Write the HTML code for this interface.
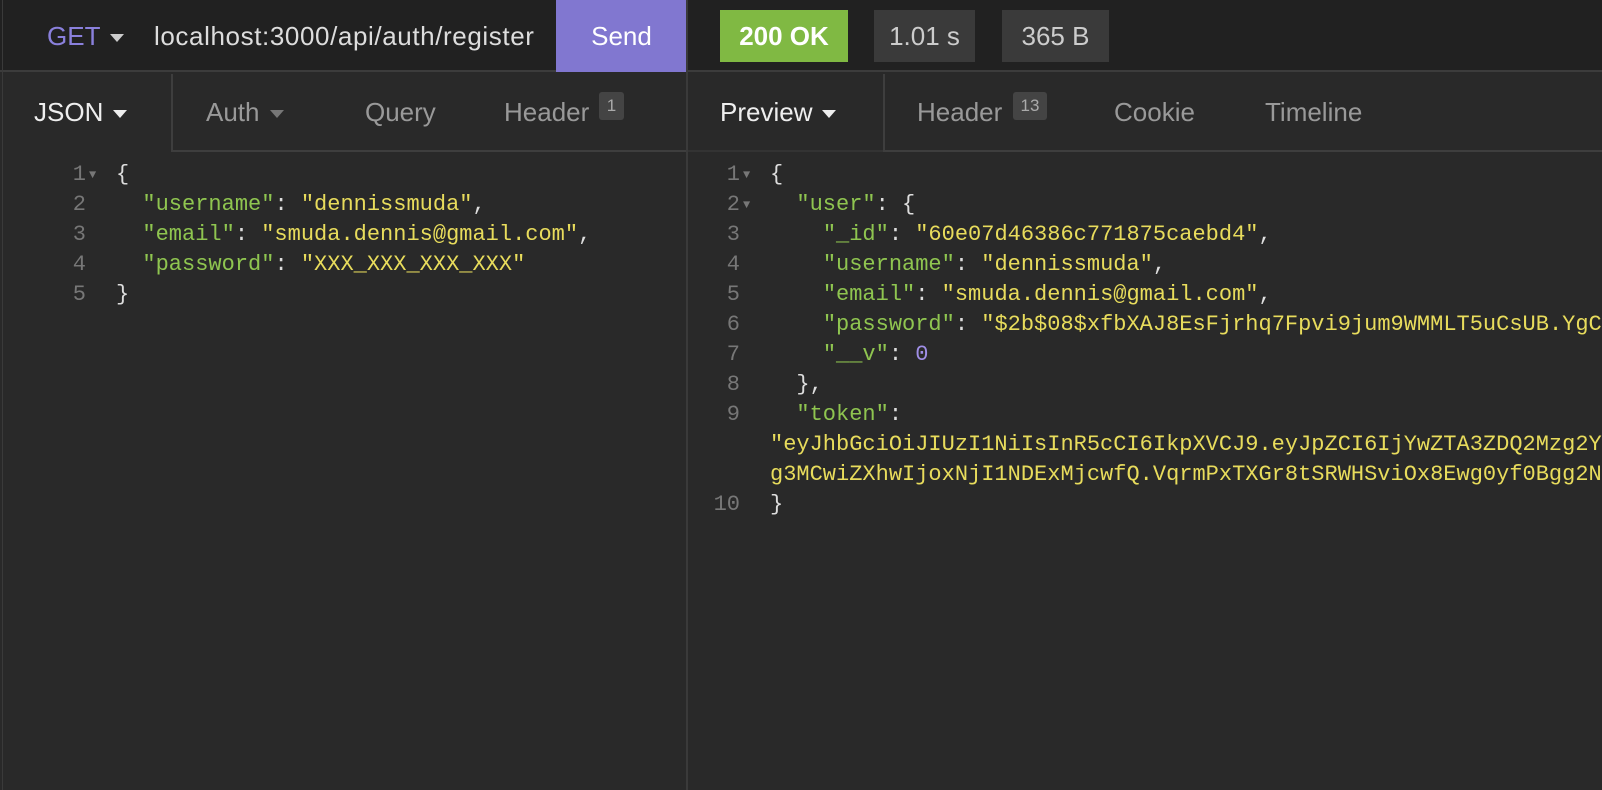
<!DOCTYPE html>
<html><head><meta charset="utf-8"><style>
*{margin:0;padding:0;box-sizing:border-box}
body{width:1602px;height:790px;background:#292929;position:relative;overflow:hidden;font-family:"Liberation Sans",sans-serif}
.a{position:absolute;white-space:pre}
.top{position:absolute;left:0;top:0;width:1602px;height:72px;background:#212121;border-bottom:2px solid #3c3c3c}
.ui{font-size:26px;line-height:30px}
.tri{display:inline-block;width:0;height:0;border-left:7px solid transparent;border-right:7px solid transparent;border-top:8px solid currentColor;vertical-align:middle;margin-left:10px}
.code{font-family:"Liberation Mono",monospace;font-size:22px;line-height:30px;color:#ddd}
.k{color:#8fc550}.s{color:#e8dc5c}.n{color:#9f8ee6}.ln{color:#777}
.badge{position:absolute;background:#444;color:#aaa;font-size:17px;line-height:28px;text-align:center;border-radius:3px}
</style></head><body>
<div class="top"></div>
<div class="a" style="left:2px;top:0;width:1px;height:790px;background:#3a3a3a"></div>
<div class="a ui" style="left:47px;top:21px;color:#8a80dc">GET<span class="tri" style="color:#ccc"></span></div>
<div class="a ui" style="left:154px;top:21px;color:#ddd;width:382px;overflow:hidden;letter-spacing:0.6px">localhost:3000/api/auth/register</div>
<div class="a" style="left:556px;top:0;width:131px;height:72px;background:#8177d0"></div>
<div class="a ui" style="left:556px;top:21px;width:131px;text-align:center;color:#fff">Send</div>
<div class="a" style="left:686px;top:0;width:2px;height:790px;background:#3a3a3a"></div>
<div class="a" style="left:720px;top:10px;width:128px;height:52px;background:#80b943"></div>
<div class="a ui" style="left:720px;top:21px;width:128px;text-align:center;color:#fff;font-weight:bold">200 OK</div>
<div class="a" style="left:874px;top:10px;width:101px;height:52px;background:#3a3a3a"></div>
<div class="a ui" style="left:874px;top:21px;width:101px;text-align:center;color:#ccc">1.01 s</div>
<div class="a" style="left:1002px;top:10px;width:107px;height:52px;background:#3a3a3a"></div>
<div class="a ui" style="left:1002px;top:21px;width:107px;text-align:center;color:#ccc">365 B</div>
<div class="a" style="left:171px;top:74px;width:2px;height:78px;background:#3e3e3e"></div>
<div class="a" style="left:171px;top:150px;width:515px;height:2px;background:#3e3e3e"></div>
<div class="a ui" style="left:34px;top:97px;color:#eee">JSON<span class="tri"></span></div>
<div class="a ui" style="left:206px;top:97px;color:#999">Auth<span class="tri" style="color:#777"></span></div>
<div class="a ui" style="left:365px;top:97px;color:#999">Query</div>
<div class="a ui" style="left:504px;top:97px;color:#999">Header</div>
<div class="badge" style="left:599px;top:92px;width:25px">1</div>
<div class="a" style="left:883px;top:74px;width:2px;height:78px;background:#3e3e3e"></div>
<div class="a" style="left:883px;top:150px;width:719px;height:2px;background:#3e3e3e"></div>
<div class="a" style="left:688px;top:150px;width:195px;height:2px;background:#333"></div>
<div class="a ui" style="left:720px;top:97px;color:#eee">Preview<span class="tri"></span></div>
<div class="a ui" style="left:917px;top:97px;color:#999">Header</div>
<div class="badge" style="left:1013px;top:92px;width:34px">13</div>
<div class="a ui" style="left:1114px;top:97px;color:#999">Cookie</div>
<div class="a ui" style="left:1265px;top:97px;color:#999">Timeline</div>
<div class="a code ln" style="left:58px;top:160px;text-align:right;width:28px">1
2
3
4
5</div>
<div class="a code ln" style="left:89px;top:160px;font-size:12px">▼</div>
<div class="a code" style="left:116px;top:160px">{
  <span class="k">"username"</span>: <span class="s">"dennissmuda"</span>,
  <span class="k">"email"</span>: <span class="s">"smuda.dennis@gmail.com"</span>,
  <span class="k">"password"</span>: <span class="s">"XXX_XXX_XXX_XXX"</span>
}</div>
<div class="a code ln" style="left:700px;top:160px;text-align:right;width:40px">1
2
3
4
5
6
7
8
9


10</div>
<div class="a code ln" style="left:743px;top:160px;font-size:12px">▼
▼</div>
<div class="a code" style="left:770px;top:160px">{
  <span class="k">"user"</span>: {
    <span class="k">"_id"</span>: <span class="s">"60e07d46386c771875caebd4"</span>,
    <span class="k">"username"</span>: <span class="s">"dennissmuda"</span>,
    <span class="k">"email"</span>: <span class="s">"smuda.dennis@gmail.com"</span>,
    <span class="k">"password"</span>: <span class="s">"$2b$08$xfbXAJ8EsFjrhq7Fpvi9jum9WMMLT5uCsUB.YgC1</span>
    <span class="k">"__v"</span>: <span class="n">0</span>
  },
  <span class="k">"token"</span>:
<span class="s">"eyJhbGciOiJIUzI1NiIsInR5cCI6IkpXVCJ9.eyJpZCI6IjYwZTA3ZDQ2Mzg2Y</span>
<span class="s">g3MCwiZXhwIjoxNjI1NDExMjcwfQ.VqrmPxTXGr8tSRWHSviOx8Ewg0yf0Bgg2N</span>
}</div>
</body></html>
